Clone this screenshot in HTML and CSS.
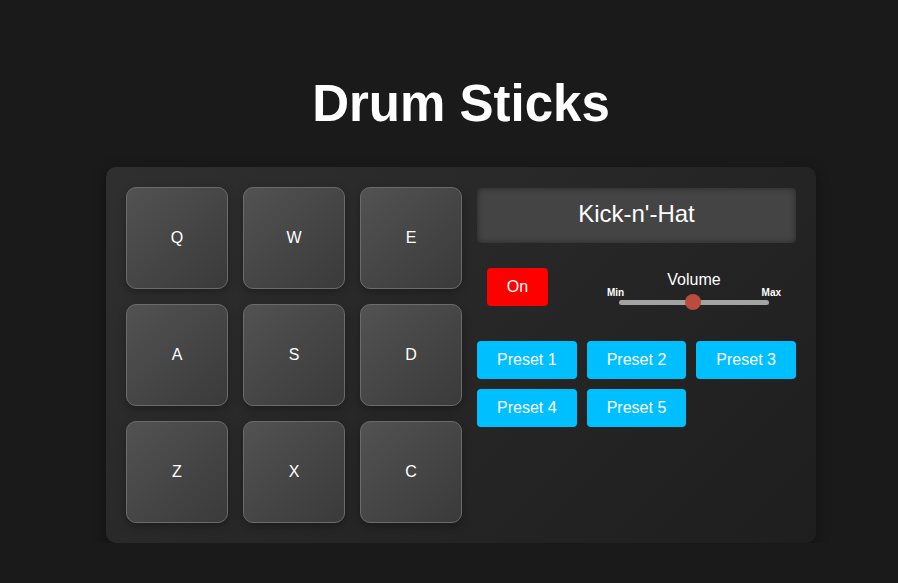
FILE: index.html
```html
<!DOCTYPE html>
<html lang="en">
<head>
<meta charset="utf-8">
<title>Drum Sticks</title>
<link rel="stylesheet" href="styles.css">
</head>
<body>
<div class="page">
  <h1 class="title">Drum Sticks</h1>
  <div class="machine">
    <div class="pads">
      <div class="pad">Q</div>
      <div class="pad">W</div>
      <div class="pad">E</div>
      <div class="pad">A</div>
      <div class="pad">S</div>
      <div class="pad">D</div>
      <div class="pad">Z</div>
      <div class="pad">X</div>
      <div class="pad">C</div>
    </div>
    <div class="controls">
      <div class="display">Kick-n'-Hat</div>
      <div class="control-row">
        <button class="power">On</button>
        <div class="volume">
          <div class="volume-label">Volume</div>
          <div class="volume-ends"><span>Min</span><span>Max</span></div>
          <div class="slider"><div class="track"></div><div class="thumb"></div></div>
        </div>
      </div>
      <div class="presets">
        <button class="preset">Preset 1</button>
        <button class="preset">Preset 2</button>
        <button class="preset">Preset 3</button>
        <button class="preset">Preset 4</button>
        <button class="preset">Preset 5</button>
      </div>
    </div>
  </div>
</div>
</body>
</html>
```
FILE: styles.css
```css
html, body {
  margin: 0;
  padding: 0;
  background: #1a1a1a;
  font-family: "Liberation Sans", Arial, sans-serif;
  color: #fff;
}
.page {
  padding-left: 24px;
  display: flex;
  flex-direction: column;
  align-items: center;
}
.title {
  margin: 74px 0 33px;
  font-size: 51px;
  line-height: 60px;
  font-weight: bold;
  color: #fff;
}
.machine {
  width: 710px;
  box-sizing: border-box;
  padding: 20px;
  display: flex;
  gap: 15px;
  border-radius: 10px;
  background: linear-gradient(135deg, #2f2f2f 0%, #1e1e1e 100%);
  box-shadow: 0 4px 14px rgba(0,0,0,0.35);
}
.pads {
  display: grid;
  grid-template-columns: repeat(3, 102px);
  grid-auto-rows: 102px;
  gap: 15px;
}
.pad {
  box-sizing: border-box;
  border: 1px solid #6b6b6b;
  border-radius: 10px;
  background: linear-gradient(135deg, #525252 0%, #3a3a3a 100%);
  box-shadow: 0 3px 8px rgba(0,0,0,0.3);
  display: flex;
  align-items: center;
  justify-content: center;
  font-size: 16px;
  color: #fff;
}
.controls {
  flex: 1;
  display: flex;
  flex-direction: column;
}
.display {
  margin-top: 1px;
  height: 55px;
  box-sizing: border-box;
  padding-bottom: 3px;
  border-radius: 4px;
  background: #444;
  box-shadow: inset 0 0 6px rgba(0,0,0,0.45);
  display: flex;
  align-items: center;
  justify-content: center;
  font-size: 24px;
  color: #fff;
}
.control-row {
  display: flex;
  align-items: flex-start;
  height: 38px;
  margin-top: 25px;
  padding-left: 10px;
}
.power {
  width: 61px;
  height: 38px;
  border: none;
  border-radius: 4px;
  background: #ff0000;
  color: #fff;
  font-family: inherit;
  font-size: 16px;
  padding: 0;
}
.volume {
  margin-left: 59px;
  width: 174px;
  display: flex;
  flex-direction: column;
  align-items: center;
}
.volume-label {
  font-size: 16px;
  line-height: 18px;
  margin-top: 3px;
}
.volume-ends {
  align-self: stretch;
  display: flex;
  justify-content: space-between;
  font-size: 10px;
  font-weight: bold;
  line-height: 10px;
  margin-top: -1px;
}
.slider {
  position: relative;
  width: 150px;
  height: 16px;
  margin-top: -4px;
}
.track {
  position: absolute;
  left: 0;
  right: 0;
  top: 6px;
  height: 5px;
  border-radius: 3px;
  background: #a3a3a3;
}
.thumb {
  position: absolute;
  left: 66px;
  top: 0;
  width: 16px;
  height: 16px;
  border-radius: 50%;
  background: #b94c3c;
}
.presets {
  margin-top: 35px;
  display: grid;
  grid-template-columns: repeat(3, 1fr);
  grid-auto-rows: 38px;
  gap: 10px;
}
.preset {
  border: none;
  border-radius: 4px;
  background: #00bfff;
  color: #fff;
  font-family: inherit;
  font-size: 16px;
  padding: 0;
}
```
